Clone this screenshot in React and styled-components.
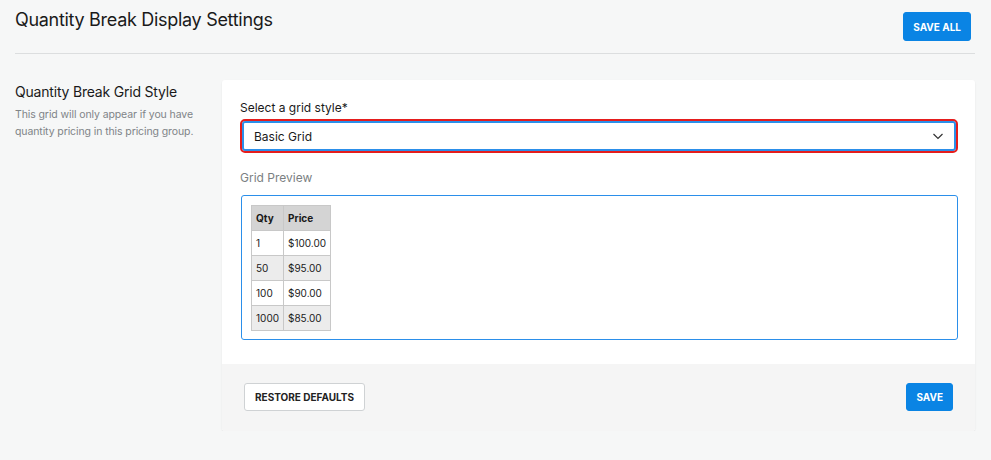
import React from "react"
import styled, { createGlobalStyle } from "styled-components"

const Global = createGlobalStyle`
  body { margin: 0; background: #f6f7f7; font-family: Inter, "Noto Sans", sans-serif; color: #1a1a1a; }
`

const Page = styled.div`
  padding: 0 16px 0 15px;
`

const Header = styled.div`
  display: flex;
  justify-content: space-between;
  align-items: flex-start;
  padding: 9px 0 12px;
  border-bottom: 1px solid #dcdedf;
`

const Title = styled.h1`
  margin: 0;
  font-size: 18px;
  font-weight: 400;
  letter-spacing: -0.3px;
`

const Button = styled.button`
  font-family: inherit;
  font-size: 10px;
  font-weight: 700;
  text-transform: uppercase;
  height: 28px;
  padding: 0 ${p => (p.$wide ? 10 : 9)}px;
  border-radius: 3px;
  cursor: pointer;
  background: ${p => (p.$primary ? "#0a84e4" : "#fff")};
  color: ${p => (p.$primary ? "#fff" : "#222")};
  border: 1px solid ${p => (p.$primary ? "#0a84e4" : "#cfd2d4")};
`

const HeaderButton = styled(Button)`
  margin-top: 3px;
  margin-right: 4px;
  height: 29px;
`

const Section = styled.div`
  display: flex;
  gap: 15px;
  margin-top: 26px;
`

const Side = styled.div`
  width: 192px;
  flex-shrink: 0;
`

const SideTitle = styled.div`
  font-size: 14px;
  letter-spacing: -0.2px;
  margin-top: 3px;
  margin-bottom: 6px;
`

const SideText = styled.div`
  font-size: 10.5px;
  letter-spacing: -0.1px;
  line-height: 17px;
  color: #808487;
`

const Card = styled.div`
  flex: 1;
  background: #fff;
  border-radius: 3px;
  box-shadow: 0 1px 2px rgba(0, 0, 0, 0.08);
  overflow: hidden;
`

const CardBody = styled.div`
  padding: 20px 17px 24px 18px;
`

const Label = styled.div`
  font-size: 12px;
  margin-bottom: 6px;
  color: ${p => (p.$muted ? "#7b7f82" : "#1a1a1a")};
`

const SelectBox = styled.div`
  display: flex;
  align-items: center;
  justify-content: space-between;
  height: 26px;
  padding: 0 10px;
  border: 2px solid #2b8fea;
  outline: 2px solid #e51d1d;
  border-radius: 3px;
  font-size: 12px;
  margin: 0 2px 19px 2px;
`

const Preview = styled.div`
  margin-top: 10px;
  margin-left: 1px;
  border: 1px solid #2b8fea;
  border-radius: 3px;
  padding: 9px 9px 10px;
  box-sizing: border-box;
  height: 145px;
`

const Table = styled.table`
  border-collapse: collapse;
  font-size: 10px;
  td, th {
    border: 1px solid #c8c8c8;
    height: 24px;
    padding: 0 4px;
    text-align: left;
  }
  th { background: #d4d4d4; font-weight: 700; }
  tbody tr:nth-child(even) td { background: #ececec; }
`

const Footer = styled.div`
  display: flex;
  justify-content: space-between;
  align-items: center;
  background: #f5f5f5;
  padding: 19px 22px 20px 22px;
`

const rows = [["1", "$100.00"], ["50", "$95.00"], ["100", "$90.00"], ["1000", "$85.00"]]

export default function App() {
  return (
    <Page>
      <Global />
      <Header>
        <Title>Quantity Break Display Settings</Title>
        <HeaderButton $primary>Save All</HeaderButton>
      </Header>
      <Section>
        <Side>
          <SideTitle>Quantity Break Grid Style</SideTitle>
          <SideText>This grid will only appear if you have quantity pricing in this pricing group.</SideText>
        </Side>
        <Card>
          <CardBody>
            <Label>Select a grid style*</Label>
            <SelectBox>
              Basic Grid
              <svg width="12" height="12" viewBox="0 0 12 12">
                <path d="M1.5 4l4.5 4.5L10.5 4" fill="none" stroke="#333" strokeWidth="1.2" />
              </svg>
            </SelectBox>
            <Label $muted>Grid Preview</Label>
            <Preview>
              <Table>
                <thead>
                  <tr><th>Qty</th><th>Price</th></tr>
                </thead>
                <tbody>
                  {rows.map(r => (
                    <tr key={r[0]}><td>{r[0]}</td><td>{r[1]}</td></tr>
                  ))}
                </tbody>
              </Table>
            </Preview>
          </CardBody>
          <Footer>
            <Button $wide>Restore Defaults</Button>
            <Button $primary>Save</Button>
          </Footer>
        </Card>
      </Section>
    </Page>
  )
}
